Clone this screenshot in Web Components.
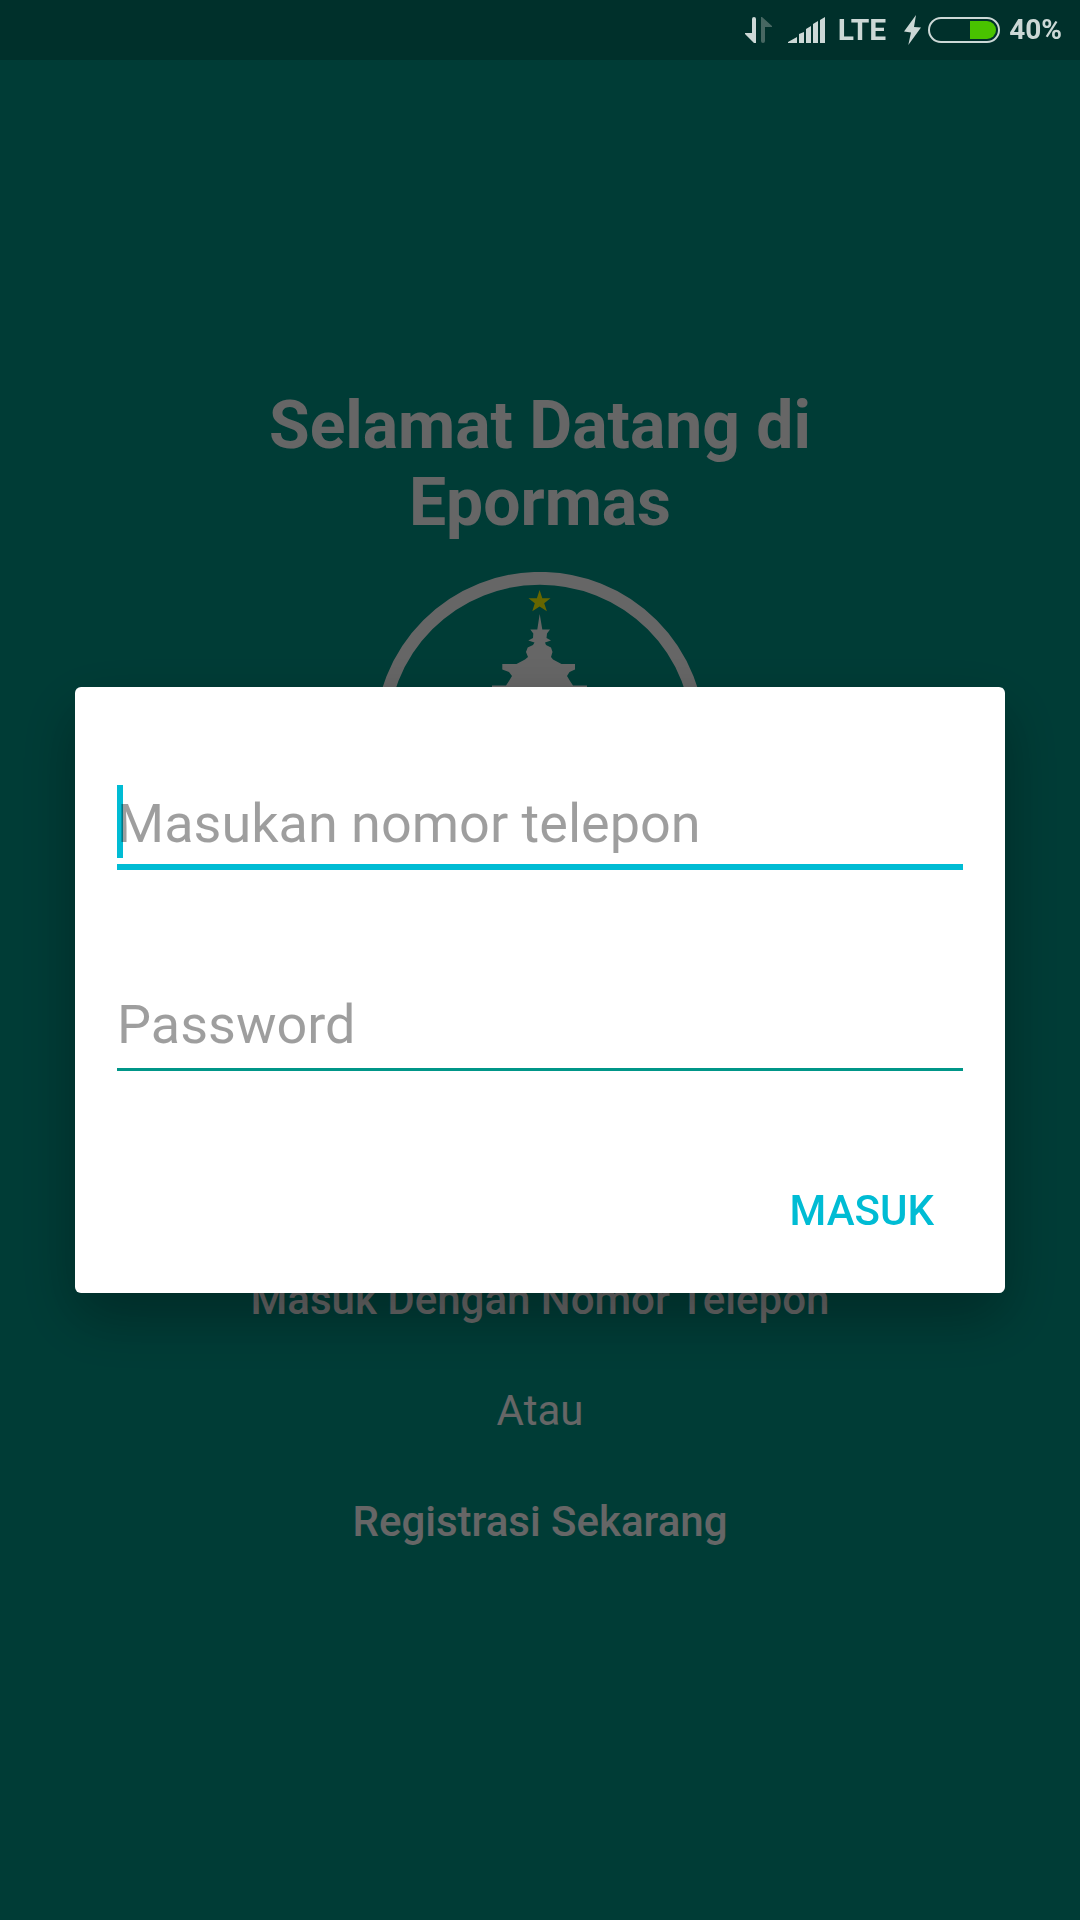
<!DOCTYPE html>
<html lang="id">
<head>
<meta charset="utf-8">
<meta name="viewport" content="width=device-width, initial-scale=1">
<title>Epormas</title>
<style>
  html, body { margin: 0; height: 100%; }
  body { font-family: Roboto, "Noto Sans", sans-serif; background: #009688; color: #fff; }
</style>
</head>
<body>
<epormas-app></epormas-app>

<template id="app-tpl">
  <style>
    :host { display: flex; flex-direction: column; min-height: 100vh; }
    status-bar { position: relative; z-index: 2; }
    welcome-screen { flex: 1; }
  </style>
  <status-bar network="LTE" level="40"></status-bar>
  <welcome-screen></welcome-screen>
  <modal-dialog>
    <text-field label="Masukan nomor telepon" type="tel" active></text-field>
    <text-field label="Password" type="password"></text-field>
    <flat-button slot="actions">MASUK</flat-button>
  </modal-dialog>
</template>

<template id="status-tpl">
  <style>
    :host { display: flex; align-items: center; justify-content: flex-end; height: 60px; padding: 0 18px 0 16px; background: rgba(0,0,0,.2); color: #ccd8d6; font-size: 30px; font-weight: 700; line-height: 36px; }
    svg { display: block; }
    .data { margin-right: 15px; }
    .signal { margin-right: 12px; }
    .net { margin-right: 18px; }
    .bolt { margin-right: 7px; }
    .battery { margin-right: 9px; }
    .pct { font-size: 28px; }
  </style>
  <svg class="data" width="28" height="28" viewBox="0 0 28 28"><path fill="#ccd8d6" d="M7 3q0-2 2-2t2 2v24H9L0 18v-1h7z"/><path fill="#476762" d="M16 1h1l10 9v1h-7v14q0 2-2 2t-2-2z"/></svg>
  <svg class="signal" width="38" height="28" viewBox="0 0 38 28" fill="#ccd8d6"><path d="M0 27v-1l9-5v6zM11 27v-9l5-2v11zM18 27V13l5-3v17zM25 27V8l5-3v22zM32 27V4l5-3v26z"/></svg>
  <span class="net"></span>
  <svg class="bolt" width="17" height="30" viewBox="0 0 17 30"><path fill="#ccd8d6" d="M12 0L0 16.500l7 1L4.300 30 17 12.500l-7-.5z"/></svg>
  <svg class="battery" width="72" height="26" viewBox="0 0 72 26"><rect x="1" y="1" width="70" height="24" rx="12" fill="none" stroke="#ccd8d6" stroke-width="2"/><path fill="#49c300" d="M42 4h17a9 9 0 0 1 0 18H42z"/></svg>
  <span class="pct"></span>
</template>

<template id="welcome-tpl">
  <style>
    :host { display: flex; flex-direction: column; align-items: center; justify-content: center; padding-bottom: 48px; box-sizing: border-box; text-align: center; }
    h1 { margin: 0 0 31px; max-width: 640px; font-size: 66px; line-height: 77px; font-weight: 700; }
    nav { display: flex; flex-direction: column; align-items: center; gap: 62px; margin-top: 373px; font-size: 42px; line-height: 49px; }
    button { all: unset; font-weight: 500; cursor: pointer; }
    p { margin: 0; }
  </style>
  <h1>Selamat Datang di Epormas</h1>
  <city-emblem></city-emblem>
  <nav>
    <button type="button">Masuk Dengan Nomor Telepon</button>
    <p>Atau</p>
    <button type="button">Registrasi Sekarang</button>
  </nav>
</template>

<template id="emblem-tpl">
  <style>:host, svg { display: block; }</style>
  <svg width="330" height="330" viewBox="0 0 330 330" role="img" aria-label="Epormas">
    <circle cx="165" cy="165" r="158.7" fill="none" stroke="#fff" stroke-width="12.8"/>
    <path fill="#ff0" d="M164.600 18l2.700 8.200h8.200l-6.300 5 2.700 8-7.300-4.600-7.300 4.600 2.500-8-6.300-5h8.400z"/>
    <path fill="#fff" d="M164.700 42L167.300 57.500H175L172 61.500 171.500 66 176 68.500 170 70.500 171 73 176 75.500 177.500 80 176 85 178 87.500 186.500 92H200V97.500L194.500 100 192 104 195 109 198 113.500H212V122H117V113.500H131L134 109 137 104 134 100 127.300 97.500V92H141.500L150 87.500 153 85 151 80 152.700 75.500 158 73 159.500 70.500 153.300 68.500 158 66 158.300 61.500 155.300 57.500H162.300z"/>
  </svg>
</template>

<template id="dialog-tpl">
  <style>
    :host { position: fixed; inset: 0; z-index: 1; display: flex; align-items: center; padding: 60px 75px 0; background: rgba(0,0,0,.6); }
    form { flex: 1; display: flex; flex-direction: column; gap: 87px; padding: 81px 42px 43px; border-radius: 6px; background: #fff; color: #000; box-shadow: 0 24px 60px rgba(0,0,0,.3); }
    footer { display: flex; justify-content: flex-end; }
  </style>
  <form role="dialog" aria-modal="true">
    <slot></slot>
    <footer><slot name="actions"></slot></footer>
  </form>
</template>

<template id="field-tpl">
  <style>
    :host { display: block; position: relative; height: 114px; box-sizing: border-box; }
    input { display: block; position: relative; box-sizing: border-box; width: 100%; height: 102px; margin: 0; padding: 23px 0 12px; border: 0; border-bottom: 3px solid #009688; outline: 0; background: transparent; color: rgba(0,0,0,.87); font: 54px/64px Roboto, "Noto Sans", sans-serif; }
    input::placeholder { color: rgba(0,0,0,.38); opacity: 1; }
    :host([active]) input { padding-bottom: 9px; border-bottom: 6px solid #00bcd4; }
    .caret { display: none; position: absolute; left: 0; top: 17px; width: 6px; height: 73px; background: #00bcd4; }
    :host([active]) .caret { display: block; }
  </style>
  <span class="caret"></span>
  <input>
</template>

<template id="button-tpl">
  <style>
    :host { display: block; }
    button { display: block; border: 0; margin: 0; padding: 0 29px; height: 80px; background: none; color: #00bcd4; font: 500 42px/49px Roboto, "Noto Sans", sans-serif; cursor: pointer; }
  </style>
  <button type="button"><slot></slot></button>
</template>

<script>
  class Base extends HTMLElement {
    constructor() {
      super();
      const tpl = document.getElementById(this.constructor.template);
      this.attachShadow({ mode: "open" }).append(tpl.content.cloneNode(true));
    }
    $(selector) { return this.shadowRoot.querySelector(selector); }
  }
  customElements.define("status-bar", class extends Base {
    static template = "status-tpl";
    connectedCallback() {
      this.$(".net").textContent = this.getAttribute("network");
      this.$(".pct").textContent = this.getAttribute("level") + "%";
    }
  });
  customElements.define("text-field", class extends Base {
    static template = "field-tpl";
    connectedCallback() {
      const input = this.$("input");
      const label = this.getAttribute("label");
      input.type = this.getAttribute("type") || "text";
      input.placeholder = label;
      input.setAttribute("aria-label", label);
    }
  });
  customElements.define("city-emblem", class extends Base { static template = "emblem-tpl"; });
  customElements.define("flat-button", class extends Base { static template = "button-tpl"; });
  customElements.define("modal-dialog", class extends Base { static template = "dialog-tpl"; });
  customElements.define("welcome-screen", class extends Base { static template = "welcome-tpl"; });
  customElements.define("epormas-app", class extends Base { static template = "app-tpl"; });
</script>
</body>
</html>
